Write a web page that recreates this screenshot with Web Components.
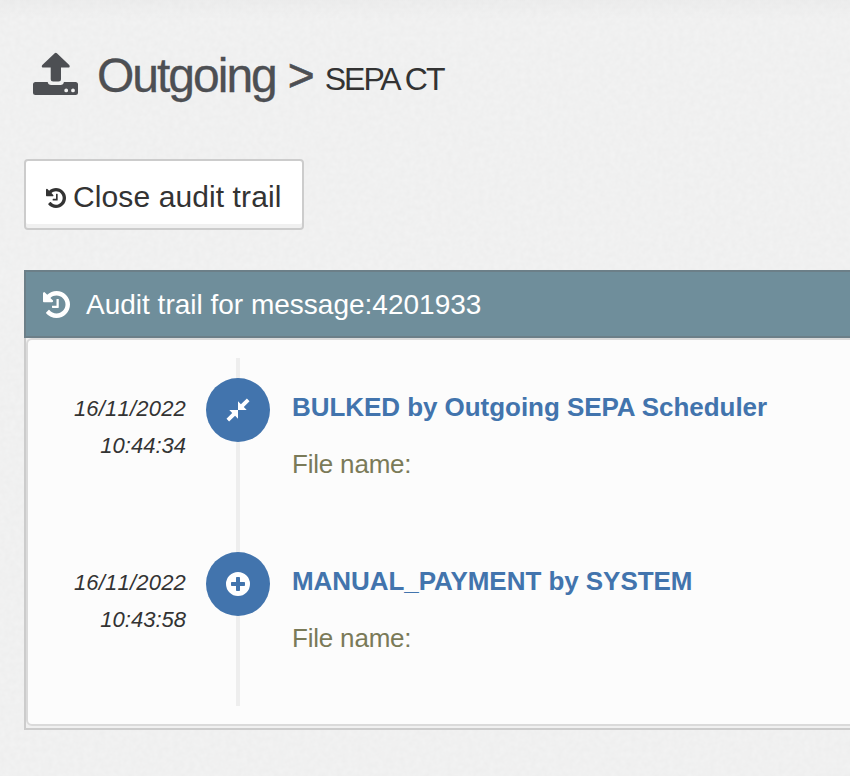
<!DOCTYPE html>
<html lang="en">
<head>
<meta charset="utf-8">
<title>Audit trail</title>
<style>
body {
    margin: 0;
    overflow: hidden;
    background-color: #f0f0f0;
    color: #333;
    font-family: "Liberation Sans", Arial, sans-serif;
}
</style>
</head>
<body>
<audit-page>
    <page-title section="Outgoing">SEPA CT</page-title>
    <audit-button>Close audit trail</audit-button>
    <audit-panel heading="Audit trail for message:4201933">
        <audit-event icon="compress" date="16/11/2022" time="10:44:34" heading="BULKED by Outgoing SEPA Scheduler">File name:</audit-event>
        <audit-event icon="plus" date="16/11/2022" time="10:43:58" heading="MANUAL_PAYMENT by SYSTEM">File name:</audit-event>
    </audit-panel>
</audit-page>

<script>
const icons = {
    history: `<svg viewBox="0 128 1536 1536"><path d="M1536 896q0 156-61 298t-164 245-245 164-298 61q-172 0-327-72.500t-264-204.500q-7-10-6.500-22.500t8.500-20.500l137-138q10-9 25-9 16 2 23 12 73 95 179 147t225 52q104 0 198.500-40.500t163.500-109.500 109.500-163.500 40.500-198.500-40.500-198.500-109.500-163.500-163.500-109.500-198.500-40.500q-98 0-188 35.500t-160 101.500l137 138q31 30 14 69-17 40-59 40h-448q-26 0-45-19t-19-45v-448q0-42 40-59 39-17 69 14l130 129q107-101 244.500-156.500t284.500-55.500q156 0 298 61t245 164 164 245 61 298zM896 608v448q0 14-9 23t-23 9h-320q-14 0-23-9t-9-23v-64q0-14 9-23t23-9h224v-352q0-14 9-23t23-9h64q14 0 23 9t9 23z"/></svg>`,
    upload: `<svg viewBox="0 0 45 43"><path d="M21.700 1.300q1.100-.9 2.200 0L36.200 13q1.200 1.200 0 2.500H28V27q0 2.500-2.500 2.500h-5.300q-2.500 0-2.500-2.500V15.500H9.300q-1.200-1.300 0-2.500z"/><path fill-rule="evenodd" d="M2.500 30h12.200q.4 3 3.500 3h9.200q3.100 0 3.500-3h11.600q2.500 0 2.500 2.500v8q0 2.500-2.500 2.500h-40Q0 43 0 40.500v-8Q0 30 2.500 30zM31.300 38.400a1.900 1.900 0 1 0 3.800 0 1.900 1.900 0 1 0-3.800 0zM38.100 38.400a1.900 1.900 0 1 0 3.800 0 1.900 1.900 0 1 0-3.800 0z"/></svg>`,
    compress: `<svg viewBox="0 0 24 24"><path d="M12 12V3.300L14.900 6.200 20.900.5 23.500 3.200 17.800 9.100 20.700 12zM12 12v8.700L9.100 17.800 3.100 23.500.5 20.800 6.200 14.900 3.300 12z"/></svg>`,
    plus: `<svg viewBox="0 0 24 24"><path fill-rule="evenodd" d="M0 12a12 12 0 1 0 24 0 12 12 0 1 0-24 0zM10.800 5h2.400q.8 0 .8.800V10h4.200q.8 0 .8.800v2.400q0 .8-.8.800H14v4.200q0 .8-.8.800h-2.400q-.8 0-.8-.8V14H5.800q-.8 0-.8-.8v-2.400q0-.8.8-.8H10V5.800q0-.8.800-.8z"/></svg>`
};

class AuditIcon extends HTMLElement {

    connectedCallback() {
        this.attachShadow({mode: "open"});
        this.shadowRoot.innerHTML = `
<style>
:host {
    display: inline-block;
    flex: none;
}

svg {
    display: block;
    width: 100%;
    height: 100%;
    fill: currentColor;
}
</style>
${icons[this.getAttribute("name")]}`;
    }
}

class AuditPage extends HTMLElement {

    connectedCallback() {
        this.attachShadow({mode: "open"});
        this.shadowRoot.innerHTML = `
<style>
:host {
    display: block;
    position: relative;
    height: 776px;
    overflow: hidden;
}

/* paper grain behind the content */
#grain {
    position: absolute;
    inset: 0;
    width: 100%;
    height: 100%;
}

main {
    position: relative;
    display: flex;
    flex-direction: column;
    align-items: flex-start;
    box-sizing: border-box;
    padding: 48px 0 0 24px;
    height: 100%;
    background: linear-gradient(rgba(0, 0, 0, .02), transparent 20px);
}
</style>
<svg id="grain" aria-hidden="true">
    <filter id="noise" x="0" y="0" width="100%" height="100%" color-interpolation-filters="sRGB">
        <feTurbulence type="fractalNoise" baseFrequency="0.19" numOctaves="2" seed="4"/>
        <feColorMatrix values=".024 0 0 0 .929  .024 0 0 0 .930  .024 0 0 0 .930  0 0 0 0 1"/>
    </filter>
    <rect width="100%" height="100%" filter="url(#noise)"/>
</svg>
<main><slot></slot></main>`;
    }
}

class PageTitle extends HTMLElement {

    connectedCallback() {
        this.attachShadow({mode: "open"});
        this.shadowRoot.innerHTML = `
<style>
:host {
    display: block;
    height: 112px;
}

h1 {
    display: flex;
    align-items: flex-start;
    margin: 0;
    padding-left: 9px;
    color: #4d4f53;
    font-size: 48px;
    font-weight: normal;
    line-height: 56px;
    letter-spacing: -2px;
    white-space: nowrap;
    -webkit-text-stroke: .3px;
}

audit-icon {
    width: 45px;
    height: 43px;
    margin: 4px 19px 0 0;
}

.arrow {
    margin: -1px 12px 0;
    font-size: 46px;
    -webkit-text-stroke: .6px;
}

small {
    margin-top: 3px;
    color: #333;
    font-size: 32px;
    -webkit-text-stroke: 0;
}
</style>
<h1><audit-icon name="upload"></audit-icon><span>${this.getAttribute("section")}</span><span class="arrow">&gt;</span><small><slot></slot></small></h1>`;
    }
}

class AuditButton extends HTMLElement {

    connectedCallback() {
        this.attachShadow({mode: "open"});
        this.shadowRoot.innerHTML = `
<style>
:host {
    display: block;
    margin-top: -1px;
}

button {
    display: flex;
    align-items: center;
    box-sizing: border-box;
    width: 280px;
    height: 71px;
    padding: 4px 0 0 20px;
    border: 2px solid #ccc;
    border-radius: 4px;
    background-color: #fff;
    box-shadow: inset 0 -4px 0 #f0f0f0;
    color: #333;
    font: inherit;
    font-size: 30px;
    letter-spacing: .1px;
    white-space: nowrap;
    cursor: pointer;
}

audit-icon {
    width: 20px;
    height: 20px;
    margin: 3px 7px 0 0;
}
</style>
<button type="button"><audit-icon name="history"></audit-icon><span><slot></slot></span></button>`;
    }
}

class AuditPanel extends HTMLElement {

    connectedCallback() {
        this.attachShadow({mode: "open"});
        this.shadowRoot.innerHTML = `
<style>
:host {
    display: block;
    width: 850px;
    margin-top: 40px;
}

header {
    display: flex;
    align-items: center;
    box-sizing: border-box;
    height: 68px;
    padding: 2px 0 0 17px;
    border: 2px solid #6c7f88;
    background-color: #6f8e9b;
    color: #fff;
    font-size: 28px;
}

audit-icon {
    width: 27px;
    height: 27px;
    margin: 0 16px 2px 0;
}

#body {
    box-sizing: border-box;
    height: 392px;
    padding-bottom: 2px;
    border: solid #ccc;
    border-width: 0 2px 2px;
    background-color: #f0f0f0;
}

#well {
    box-sizing: border-box;
    height: 388px;
    padding: 18px 0 0 20px;
    border: 2px solid #dadada;
    border-radius: 6px;
    background-color: #fcfcfc;
}
</style>
<header><audit-icon name="history"></audit-icon><span>${this.getAttribute("heading")}</span></header>
<div id="body"><div id="well"><slot></slot></div></div>`;
    }
}

class AuditEvent extends HTMLElement {

    connectedCallback() {
        this.attachShadow({mode: "open"});
        this.shadowRoot.innerHTML = `
<style>
:host {
    display: grid;
    grid-template-columns: 138px 64px 1fr;
    height: 174px;
}

time {
    padding-top: 32px;
    font-size: 22px;
    font-style: italic;
    font-kerning: none;
    line-height: 37px;
    text-align: right;
}

time span {
    display: block;
}

time span:first-child {
    letter-spacing: .2px;
}

#track {
    display: flex;
    justify-content: center;
    align-items: flex-start;
    box-sizing: border-box;
    margin-left: 20px;
    width: 64px;
    padding-top: 20px;
    background: linear-gradient(#eee, #eee) center / 4px 100% no-repeat;
}

#dot {
    display: flex;
    justify-content: center;
    align-items: center;
    width: 64px;
    height: 64px;
    border-radius: 50%;
    background-color: #4274ad;
    color: #fff;
}

audit-icon {
    width: 24px;
    height: 24px;
}

#content {
    padding: 34px 0 0 42px;
    font-size: 26px;
}

h2 {
    margin: 0;
    color: #4274ad;
    font-size: 26px;
    letter-spacing: -.05px;
    line-height: 30px;
    white-space: nowrap;
}

p {
    margin: 27px 0 0;
    color: #7a7a58;
    letter-spacing: -.2px;
    line-height: 30px;
}
</style>
<time><span>${this.getAttribute("date")}</span><span>${this.getAttribute("time")}</span></time>
<div id="track"><div id="dot"><audit-icon name="${this.getAttribute("icon")}"></audit-icon></div></div>
<div id="content"><h2>${this.getAttribute("heading")}</h2><p><slot></slot></p></div>`;
    }
}

window.customElements.define("audit-icon", AuditIcon);
window.customElements.define("audit-page", AuditPage);
window.customElements.define("page-title", PageTitle);
window.customElements.define("audit-button", AuditButton);
window.customElements.define("audit-panel", AuditPanel);
window.customElements.define("audit-event", AuditEvent);
</script>
</body>
</html>
